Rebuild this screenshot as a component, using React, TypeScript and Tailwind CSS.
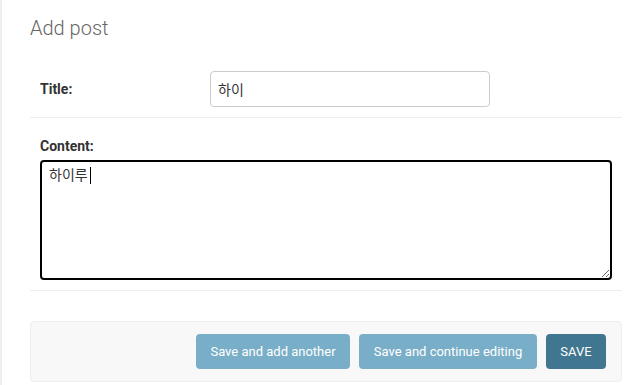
import React from 'react';

const font = { fontFamily: 'Roboto, "Noto Sans CJK KR", sans-serif' };

const App = () => {
  return (
    <div className="min-h-[385px] w-[636px] bg-white border-l-2 border-[#eee]" style={font}>
      <div className="pl-[28px] pr-[14px] pt-[16px]">
        <h1 className="text-[20px] leading-[24px] font-light text-[#666] mb-[21px]">Add post</h1>

        <form>
          {/* Title */}
          <div className="flex items-center px-[10px] py-[10px] border-b border-[#eee]">
            <label className="w-[170px] shrink-0 text-[14px] font-bold text-[#333]">Title:</label>
            <input
              type="text"
              defaultValue="하이"
              className="w-[280px] h-[36px] px-[7px] text-[14px] text-[#333] border border-[#ccc] rounded-[4px] outline-none"
            />
          </div>

          {/* Content */}
          <div className="px-[10px] pt-[20px] pb-[10px] border-b border-[#eee]">
            <label className="block text-[14px] leading-[17px] font-bold text-[#333] mb-[5px]">Content:</label>
            <div className="relative">
              <textarea
                defaultValue="하이루"
                className="block w-[572px] h-[120px] px-[7px] py-[3px] text-[14px] leading-[20px] text-[#333] border-2 border-black rounded-[4px] outline-none"
              />
              <span className="absolute left-[50px] top-[7px] w-px h-[17px] bg-black" />
            </div>
          </div>

          {/* Submit row */}
          <div className="mt-[30px] flex justify-end gap-[9px] px-[15px] py-[12px] bg-[#f8f8f8] border border-[#eee] rounded-[4px]">
            <button type="button" className="h-[35px] w-[154px] rounded-[4px] bg-[#79aec8] text-white text-[13px]">
              Save and add another
            </button>
            <button type="button" className="h-[35px] w-[178px] rounded-[4px] bg-[#79aec8] text-white text-[13px]">
              Save and continue editing
            </button>
            <button type="button" className="h-[35px] w-[60px] rounded-[4px] bg-[#417690] text-white text-[13px]">
              SAVE
            </button>
          </div>
        </form>
      </div>
    </div>
  );
};

export default App;
